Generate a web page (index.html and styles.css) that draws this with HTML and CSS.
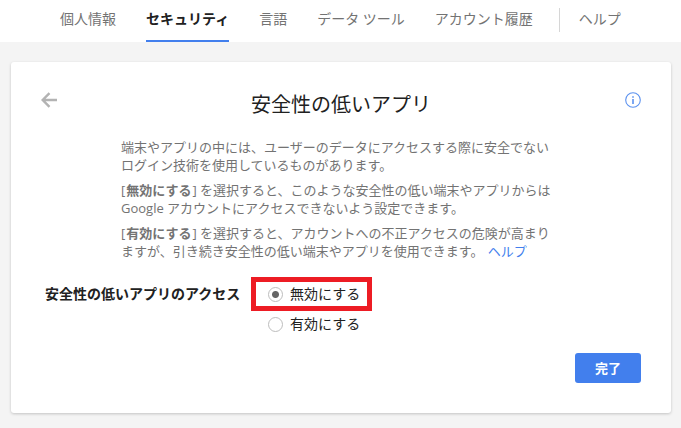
FILE: index.html
```html
<!DOCTYPE html>
<html lang="ja">
<head>
<meta charset="UTF-8">
<meta name="viewport" content="width=device-width, initial-scale=1">
<title>安全性の低いアプリ</title>
<link rel="stylesheet" href="styles.css">
</head>
<body>
  <nav class="tabs">
    <a href="#">個人情報</a>
    <a href="#" class="active">セキュリティ</a>
    <a href="#">言語</a>
    <a href="#">データ ツール</a>
    <a href="#">アカウント履歴</a>
    <a href="#" class="help">ヘルプ</a>
  </nav>

  <main class="card">
    <header class="card-header">
      <a href="#" class="icon" aria-label="戻る">
        <svg width="16" height="16" viewBox="0 0 16 16" fill="none" stroke="#b3b3b3" stroke-width="2.4">
          <path d="M16 8H2M8.5 1.2L1.7 8l6.8 6.8"/>
        </svg>
      </a>
      <h1>安全性の低いアプリ</h1>
      <a href="#" class="icon" aria-label="情報">
        <svg width="16" height="16" viewBox="0 0 16 16">
          <circle cx="8" cy="8" r="7.3" fill="none" stroke="#5c92ef" stroke-width="1.1"/>
          <path d="M7.2 4.2h1.6v1.6H7.2zM7.2 7h1.6v5H7.2z" fill="#5c92ef"/>
        </svg>
      </a>
    </header>

    <div class="description">
      <p>端末やアプリの中には、ユーザーのデータにアクセスする際に安全でないログイン技術を使用しているものがあります。</p>
      <p>[<b>無効にする</b>] を選択すると、このような安全性の低い端末やアプリからは Google アカウントにアクセスできないよう設定できます。</p>
      <p>[<b>有効にする</b>] を選択すると、アカウントへの不正アクセスの危険が高まりますが、引き続き安全性の低い端末やアプリを使用できます。 <a href="#">ヘルプ</a></p>
    </div>

    <form>
      <div class="setting" role="radiogroup" aria-labelledby="access-label">
        <div class="setting-label" id="access-label">安全性の低いアプリのアクセス</div>
        <div class="options">
          <label class="option marked"><input type="radio" name="access" value="off" checked>無効にする</label>
          <label class="option"><input type="radio" name="access" value="on">有効にする</label>
        </div>
      </div>
      <div class="actions">
        <button type="button">完了</button>
      </div>
    </form>
  </main>
</body>
</html>
```
FILE: styles.css
```css
* {
  box-sizing: border-box;
}
body {
  margin: 0;
  font-family: "Open Sans", "Noto Sans CJK JP", sans-serif;
  font-size: 14px;
  line-height: 18px;
  color: #212121;
  background: #f4f4f4;
}
a {
  color: #427fed;
  text-decoration: none;
}

/* top tabs */
.tabs {
  display: flex;
  gap: 30px;
  height: 42px;
  padding-left: 60px;
  background: #fff;
  white-space: nowrap;
}
.tabs a {
  padding-top: 10px;
  color: #737373;
}
.tabs .active {
  color: #212121;
  font-weight: bold;
  border-bottom: 2px solid #427fed;
}
.tabs .help {
  height: 24px;
  margin: 8px 0 0 -4px;
  padding: 2px 0 0 19px;
  border-left: 1px solid #d6d6d6;
}

/* card */
.card {
  margin: 20px 10px 15px 11px;
  padding: 30px;
  background: #fff;
  border-radius: 3px;
  box-shadow: 0 1px 3px rgba(0, 0, 0, 0.2);
}
.card-header {
  display: flex;
  justify-content: space-between;
}
.icon {
  height: 16px;
}
.icon svg {
  display: block;
}
h1 {
  margin: 0;
  font-size: 20px;
  font-weight: normal;
  line-height: 26px;
}
.description {
  margin: 20px 84px 0 80px;
  font-size: 13px;
  color: #737373;
}
.description p {
  margin: 0 0 7px;
}
.description b {
  margin: 0 1px;
}
.description a {
  margin-left: 1px;
}

/* access setting */
.setting {
  display: flex;
  margin: 17px 0 0 4px;
}
.setting-label {
  width: 206px;
  padding-top: 8px;
  font-weight: bold;
}
.option {
  display: flex;
  align-items: center;
  height: 26px;
  padding: 0 12px 0 17px;
}
.marked {
  height: 34px;
  padding: 0 7px 0 12px;
  border: 5px solid #ed1c24;
}
.option input {
  appearance: none;
  width: 15px;
  height: 15px;
  margin: 0 7px 0 0;
  border: 1px solid #bdbdbd;
  border-radius: 50%;
}
.option input:checked {
  background: radial-gradient(circle, #666 3px, transparent 4px);
}
.actions {
  display: flex;
  justify-content: flex-end;
  margin-top: 16px;
}
button {
  width: 66px;
  height: 30px;
  padding: 0;
  border: none;
  border-radius: 3px;
  background: #427fed;
  color: #fff;
  font: bold 13px/18px "Open Sans", "Noto Sans CJK JP", sans-serif;
}
```
